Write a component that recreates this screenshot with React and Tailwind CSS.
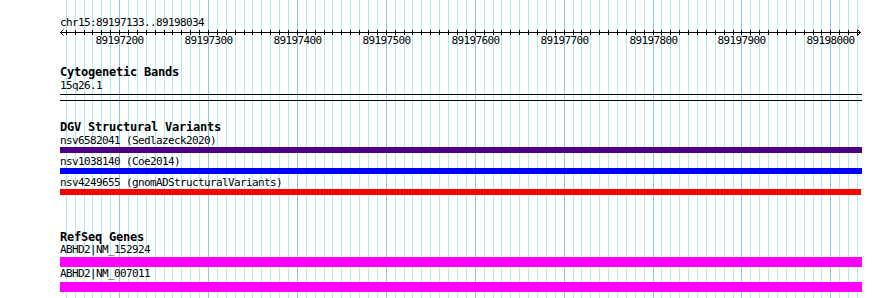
import React from "react";

const START = 89197133;
const END = 89198034;
const LEFT = 60;
const WIDTH = 802;
const scale = WIDTH / (END - START + 1);
const xOf = (p) => LEFT + Math.floor((p - START) * scale);

const ticks = [];
for (let p = Math.ceil(START / 10) * 10; p <= END; p += 10) ticks.push(p);
const majors = ticks.filter((p) => p % 100 === 0);

function Grid() {
  return (
    <svg className="absolute left-0 top-0 pointer-events-none" width="890" height="298">
      {ticks.map((p) => (
        <rect
          key={p}
          x={xOf(p)}
          y={0}
          width={1}
          height={298}
          fill={p % 100 === 0 ? "#86cbe8" : "#aaeef0"}
        />
      ))}
    </svg>
  );
}

function Ruler() {
  return (
    <svg width="890" height="24" className="block shrink-0">
      <rect x={LEFT} y={6} width={801} height={1} fill="#000" />
      <path d="M63.5 3.5 L60.5 6.5 L63.5 9.5" stroke="#000" strokeWidth="1" fill="none" />
      <path d="M857.5 3.5 L860.5 6.5 L857.5 9.5" stroke="#000" strokeWidth="1" fill="none" />
      {ticks.map((p) => (
        <rect key={p} x={xOf(p)} y={4} width={1} height={5} fill="#000" />
      ))}
      {majors.map((p) => (
        <text
          key={p}
          x={xOf(p) + 0.5}
          y={18}
          textAnchor="middle"
          fontFamily="'DejaVu Sans Mono', monospace"
          fontSize="11"
          letterSpacing="-0.62"
          fill="#000"
        >
          {p}
        </text>
      ))}
    </svg>
  );
}

const small = "pl-[60px] text-[11px] leading-[13px] tracking-[-0.62px] whitespace-nowrap";
const bold = "pl-[60px] text-[12px] leading-[13px] font-bold tracking-[-0.22px] whitespace-nowrap";

function Feature({ label, color, barW = 802, barH = 6, gap = 2, barGap = 1 }) {
  return (
    <div className="flex flex-col" style={{ marginTop: gap }}>
      <div className={`${small} relative z-10 h-[12px]`}>{label}</div>
      <div className="ml-[60px]" style={{ width: barW, height: barH, background: color, marginTop: barGap }} />
    </div>
  );
}

export default function App() {
  return (
    <div className="relative w-[890px] h-[298px] bg-white overflow-hidden text-black font-['DejaVu_Sans_Mono',monospace]">
      <Grid />
      <div className="relative flex flex-col">
        <div className={`${small} mt-[16px] h-[10px]`}>chr15:89197133..89198034</div>
        <Ruler />
        <div className={`${bold} mt-[16px] h-[13px]`}>Cytogenetic Bands</div>
        <div className={`${small} h-[15px]`}>15q26.1</div>
        <div className="ml-[60px] w-[802px] h-[7px] border-t border-b border-black" />
        <div className={`${bold} mt-[20px] h-[13px]`}>DGV Structural Variants</div>
        <Feature label="nsv6582041 (Sedlazeck2020)" color="#4b0082" gap={0} />
        <Feature label="nsv1038140 (Coe2014)" color="#0000ff" />
        <Feature label="nsv4249655 (gnomADStructuralVariants)" color="#ff0000" barW={801} />
        <div className="pl-[60px] text-[12px] leading-[11px] font-bold tracking-[-0.22px] whitespace-nowrap mt-[37px] h-[11px]">
          RefSeq Genes
        </div>
        <Feature label="ABHD2|NM_152924" color="#ff00ff" barH={10} gap={0} barGap={2} />
        <Feature label="ABHD2|NM_007011" color="#ff00ff" barH={10} gap={0} barGap={3} />
      </div>
    </div>
  );
}
